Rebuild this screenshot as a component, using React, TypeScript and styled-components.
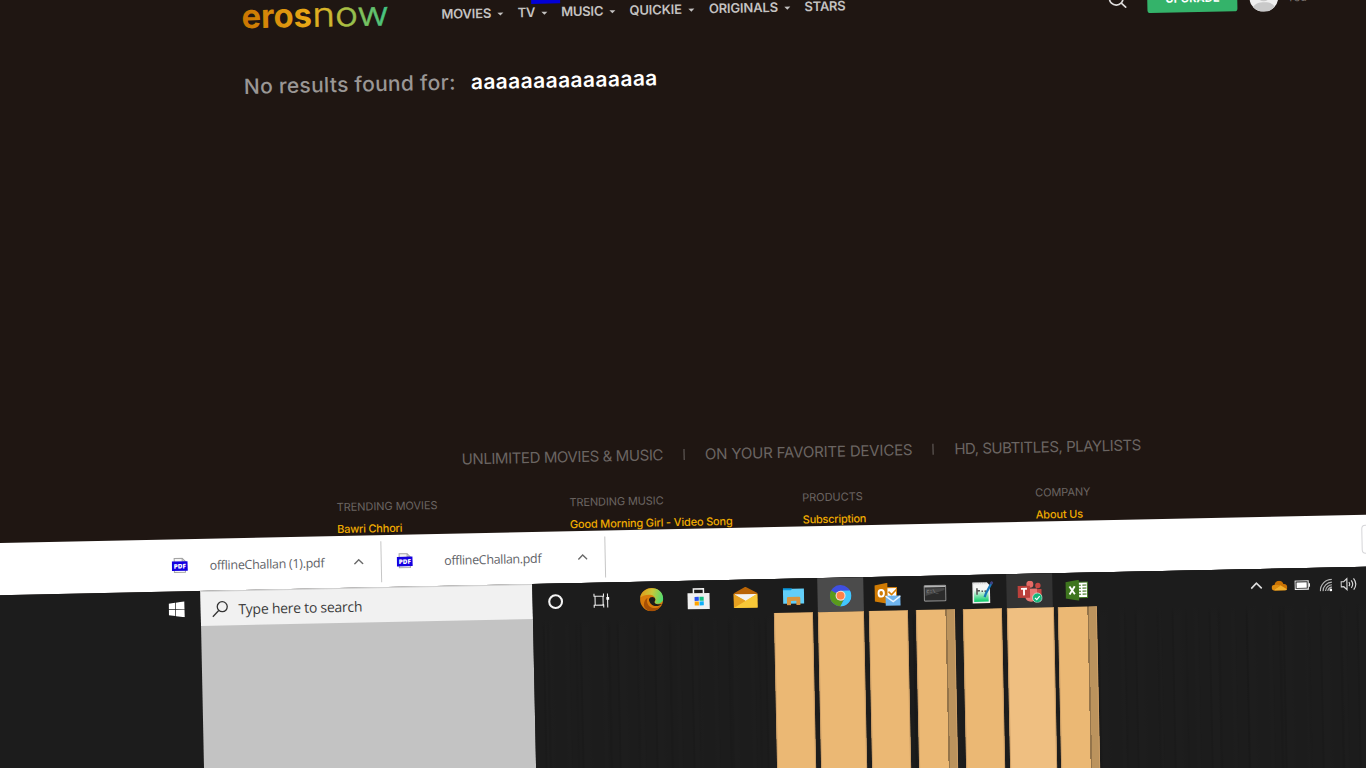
import React from "react";
import styled, { createGlobalStyle } from "styled-components";

const GlobalStyle = createGlobalStyle`
  *, *::before, *::after { box-sizing: border-box; }
  html, body { margin: 0; padding: 0; background: #1f1612; overflow: hidden; }
`;

const Viewport = styled.div`
  width: 1366px;
  height: 768px;
  overflow: hidden;
  background: #1f1612;
  font-family: Inter, "Liberation Sans", sans-serif;
`;

/* The whole screen leans slightly; it overhangs the left edge by 20px. */
const Screen = styled.div`
  position: relative;
  width: 1410px;
  height: 810px;
  margin-left: -20px;
  display: flex;
  flex-direction: column;
  transform: rotate(-1.19deg);
  transform-origin: 20px 0;
`;

/* ---------- site ---------- */

const Site = styled.div`
  height: 543px;
  flex: none;
  overflow: hidden;
  display: flex;
  flex-direction: column;
  background: #1f1612;
`;

const Header = styled.header`
  height: 46px;
  flex: none;
  display: flex;
  align-items: center;
  padding-left: 260px;
`;

const LogoBox = styled.div`
  width: 201px;
  height: 46px;
  flex: none;
`;

const Nav = styled.nav`
  width: 666.3px;
  flex: none;
  display: flex;
  align-items: center;
`;

const NavItem = styled.div<{ $w: number }>`
  width: ${(p) => p.$w}px;
  flex: none;
  display: flex;
  align-items: center;
  gap: 6px;
  color: #c4c2c1;
  font-size: 13px;
  line-height: 20px;
  font-weight: 600;
  white-space: nowrap;
`;

const NavLabel = styled.span<{ $ls: number }>`
  letter-spacing: ${(p) => p.$ls}px;
`;

const Caret = styled.span`
  width: 0;
  height: 0;
  margin-top: 3px;
  border: 3px solid transparent;
  border-top-color: #c4c2c1;
  border-bottom: 0;
`;

const Upgrade = styled.button`
  width: 90px;
  height: 27px;
  margin-left: 20px;
  padding: 0;
  border: 0;
  border-radius: 3px;
  background: #34b36a;
  color: #fff;
  font: 700 11px/27px Inter, sans-serif;
  letter-spacing: 0.1px;
`;

const Avatar = styled.div`
  width: 29px;
  height: 29px;
  margin: 0 9px 0 11.5px;
  border-radius: 50%;
  overflow: hidden;
`;

const UserName = styled.span`
  padding-top: 1px;
  color: #77716e;
  font-size: 11px;
  line-height: 16px;
`;

const Marker = styled.div`
  position: absolute;
  left: 551px;
  top: 0;
  width: 29px;
  height: 15px;
  background: #0200d6;
`;

const Result = styled.h1`
  height: 90px;
  margin: 0;
  padding-left: 262px;
  display: flex;
  align-items: center;
  color: #9a9795;
  font-size: 21px;
  font-weight: 500;
  letter-spacing: 0.27px;
  white-space: nowrap;
`;

const ResultLabel = styled.span`
  width: 227px;
`;

const Query = styled.span`
  color: #fff;
  font-weight: 600;
  letter-spacing: 0.4px;
`;

const Tagline = styled.div`
  height: 30px;
  margin-top: auto;
  padding-left: 472px;
  display: flex;
  align-items: center;
  color: #6b6562;
  font-size: 15px;
  white-space: nowrap;
`;

const TagText = styled.span<{ $w: number; $ls: number }>`
  width: ${(p) => p.$w}px;
  flex: none;
  letter-spacing: ${(p) => p.$ls}px;
`;

const TagBar = styled.i`
  width: 1px;
  height: 11px;
  margin: 0 20.5px 0 20.9px;
  background: #6b6562;
`;

const Columns = styled.div`
  height: 60px;
  flex: none;
  padding: 21px 0 0 346px;
  display: flex;
`;

const Column = styled.div`
  width: 232.9px;
  flex: none;
  font-size: 11px;
  white-space: nowrap;
`;

const ColumnTitle = styled.div<{ $ls: number }>`
  line-height: 20px;
  color: #6b6562;
  letter-spacing: ${(p) => p.$ls}px;
`;

const ColumnLink = styled.a<{ $ls: number }>`
  display: block;
  line-height: 24px;
  color: #f0ab00;
  font-weight: 500;
  letter-spacing: ${(p) => p.$ls}px;
`;

/* ---------- download shelf ---------- */

const Shelf = styled.div`
  height: 52px;
  flex: none;
  display: flex;
  align-items: center;
  padding-left: 164px;
  background: #fff;
  font-family: "Open Sans", "Noto Sans", sans-serif;
`;

const Download = styled.div<{ $w: number }>`
  width: ${(p) => p.$w}px;
  height: 41px;
  padding: 0 17px 0 15.6px;
  flex: none;
  display: flex;
  align-items: center;
  border-right: 1px solid #c6c6c6;
`;

const FileName = styled.span<{ $gap: number; $ls: number }>`
  flex: 1;
  padding-left: ${(p) => p.$gap}px;
  padding-top: 1px;
  color: #5f6368;
  font-size: 12.5px;
  line-height: 18px;
  letter-spacing: ${(p) => p.$ls}px;
  white-space: nowrap;
`;

const ShowAll = styled.div`
  width: 60px;
  height: 29px;
  margin: -4px 0 0 756px;
  border: 1px solid #d5d5d8;
  border-radius: 4px;
`;

/* ---------- task bar ---------- */

const Taskbar = styled.div`
  flex: 1;
  display: flex;
  align-items: stretch;
  padding-left: 20px;
  background: #1c1c1c;
`;

const StartArea = styled.div`
  width: 188px;
  flex: none;
  height: 35px;
  padding-left: 156px;
  display: flex;
  align-items: center;
`;

const SearchColumn = styled.div`
  width: 332.2px;
  flex: none;
  background: #c3c3c3;
  font-family: "Open Sans", "Noto Sans", sans-serif;
`;

const SearchBox = styled.div`
  height: 35.4px;
  padding: 0 0 0 10.6px;
  display: flex;
  align-items: center;
  gap: 10px;
  background: #f1f1f1;
  border-top: 1px solid #cfcfcf;
  color: #3c3c3c;
  font-size: 14px;
  letter-spacing: -0.26px;
  white-space: nowrap;
`;

const Streaks = styled.div`
  flex: 1;
  display: flex;
  background:
    linear-gradient(#1c1c1c 0 36px, transparent 46px),
    repeating-linear-gradient(90deg, transparent 0 13px, rgba(0, 0, 0, 0.08) 14px 15px, transparent 17px 41px, rgba(0, 0, 0, 0.06) 43px, transparent 45px 61px),
    repeating-linear-gradient(90deg, #1c1c1c 0 9px, #1a1a1a 10px 11px, #1d1d1d 12px 17px, #1c1c1c 21px 31px, #1d1d1d 33px 35px, #1b1b1b 37px);
`;

const Slot = styled.div<{ $w?: number; $ml?: number }>`
  width: ${(p) => p.$w ?? 47.35}px;
  margin-left: ${(p) => p.$ml ?? 0}px;
  flex: none;
  display: flex;
  flex-direction: column;
  align-items: center;
`;

const SlotIcon = styled.div<{ $bg?: string }>`
  width: 46px;
  height: 34px;
  flex: none;
  display: flex;
  align-items: center;
  justify-content: center;
  padding-top: 1px;
  background: ${(p) => p.$bg ?? "transparent"};
  svg { display: block; }
`;

const Beam = styled.div<{ $w: number; $color: string; $split?: boolean }>`
  width: ${(p) => p.$w}px;
  flex: 1;
  background: ${(p) =>
    p.$split
      ? `linear-gradient(90deg, ${p.$color} 0 29.5px, #94744a 29.5px 31px, #bb935d 31px)`
      : p.$color};
  box-shadow: inset 1px 0 #cd9f67, inset -1px 0 #cd9f67;
`;

const Tray = styled.div`
  height: 34px;
  margin-left: 143.8px;
  display: flex;
  align-items: center;
`;

const TrayCell = styled.div`
  width: 23.2px;
  display: flex;
  justify-content: center;
`;

/* ---------- drawings ---------- */

const Logo = () => (
  <svg width="160" height="46" viewBox="0 0 160 46">
    <defs>
      <linearGradient id="lg" gradientUnits="userSpaceOnUse" x1="1" y1="0" x2="147" y2="0">
        <stop offset="0" stopColor="#c97400" />
        <stop offset="0.45" stopColor="#e8a716" />
        <stop offset="0.58" stopColor="#d8b62a" />
        <stop offset="0.75" stopColor="#9cc04a" />
        <stop offset="1" stopColor="#3fc585" />
      </linearGradient>
    </defs>
    <text x="1" y="33.3" fontFamily="Inter" fontWeight="700" fontSize="33" textLength="70.5" lengthAdjust="spacingAndGlyphs" fill="url(#lg)">eros</text>
    <text x="72" y="33.3" fontFamily="Inter" fontWeight="300" fontSize="33.5" textLength="76.5" lengthAdjust="spacingAndGlyphs" fill="url(#lg)" stroke="url(#lg)" strokeWidth="0.5">now</text>
  </svg>
);

const Magnifier = () => (
  <svg width="20" height="20" viewBox="0 0 20 20" fill="none" stroke="#dddbda" strokeWidth="1.7">
    <circle cx="9" cy="8.5" r="6.8" />
    <path d="M14 13.500l4.300 4" strokeLinecap="round" />
  </svg>
);

const Person = () => (
  <svg width="29" height="29" viewBox="0 0 29 29">
    <rect width="29" height="29" fill="#efefef" />
    <path d="M3 25c3-5 7-5.500 11.500-5.500S23 20 26 25l-4 4H7z" fill="#c9c9c9" />
    <circle cx="14.5" cy="11.5" r="7" fill="#c9c9c9" />
  </svg>
);

const PdfIcon = () => (
  <svg width="16" height="16" viewBox="0 0 16 16">
    <path d="M2.5 15V1h8l3 3v11z" fill="#f4f4f4" stroke="#a4a4a4" />
    <path d="M10.5 1v3h3" fill="none" stroke="#a4a4a4" />
    <rect x="0" y="4" width="16" height="9.5" fill="#1400e0" />
    <text x="8" y="11.2" textAnchor="middle" fontFamily="Open Sans" fontWeight="800" fontSize="6.4" fill="#fff">PDF</text>
  </svg>
);

const Chevron = ({ color, w = 10 }: { color: string; w?: number }) => (
  <svg width={w} height={w * 0.6} viewBox="0 0 10 6" fill="none" stroke={color} strokeWidth="1.4">
    <path d="M0.6 5.4L5 1l4.400 4.400" />
  </svg>
);

const WindowsIcon = () => (
  <svg width="16" height="16" viewBox="0 0 16 16" fill="#fff">
    <path d="M0 2.2L6.5 1.3V7.6H0zM7.2 1.2L16 0V7.6H7.2zM0 8.3H6.5V14.6L0 13.7zM7.2 8.3H16V16L7.2 14.7z" />
  </svg>
);

const SearchGlyph = () => (
  <svg width="17" height="17" viewBox="0 0 17 17" fill="none" stroke="#333" strokeWidth="1.3">
    <circle cx="10.6" cy="6.2" r="5" />
    <path d="M7 9.9L1 16" />
  </svg>
);

const Cortana = () => (
  <svg width="16" height="16" viewBox="0 0 16 16">
    <circle cx="8" cy="8" r="6.4" fill="none" stroke="#f4f4f4" strokeWidth="2.1" />
  </svg>
);

const TaskView = () => (
  <svg width="18" height="16" viewBox="0 0 18 16" fill="none" stroke="#e8e8e8" strokeWidth="1.1">
    <path d="M1.5 1v2.5H11V1M1.5 15v-2.5H11V15M2.500 3.500v9M10.500 3.500v9M15 1v14" />
    <rect x="13.8" y="4.5" width="2.8" height="2.8" fill="#fff" stroke="none" />
  </svg>
);

const Edge = () => (
  <svg width="24" height="24" viewBox="0 0 24 24">
    <defs>
      <linearGradient id="ed" x1="0" y1="0.3" x2="1" y2="0.5">
        <stop offset="0" stopColor="#e09a18" />
        <stop offset="0.5" stopColor="#c9c83a" />
        <stop offset="1" stopColor="#51dc70" />
      </linearGradient>
    </defs>
    <circle cx="12" cy="12" r="11.5" fill="#d87b0b" />
    <path d="M0.6 10C2-2 23-3 23.6 11c.2 5-6 6-8.2 4.6-1-.8.8-1.6.5-3.9C15 5.5 5 6 .6 10z" fill="url(#ed)" />
    <path d="M8 10c-2 5 1 11 8 10.5 3 0 5-2 6-3.5-3 7-13 9-17 3-2-4 0-8 3-10z" fill="#a75005" />
    <path d="M9.3 12c1-3.5 6-3 6.4-.3.2 1.6-1.5 2.4-.6 3.8 1.5 1.8 5 1.5 7.5 1.1-5 3.4-12 2.4-13.3-4.6z" fill="#1d1c1a" />
  </svg>
);

const Store = () => (
  <svg width="24" height="24" viewBox="0 0 24 24">
    <path d="M7 7V2.2h10V7" fill="none" stroke="#f2f2f2" strokeWidth="1.5" />
    <path d="M1 6.5h22V22.5H1z" fill="#f0f0f0" />
    <rect x="8" y="10.2" width="4.2" height="4" fill="#2650f0" />
    <rect x="12.9" y="10.2" width="4.2" height="4" fill="#12bf82" />
    <rect x="8" y="14.8" width="4.2" height="4" fill="#ffa400" />
    <rect x="12.9" y="14.8" width="4.2" height="4" fill="#10b0f8" />
  </svg>
);

const Mail = () => (
  <svg width="24" height="22" viewBox="0 0 24 22">
    <path d="M0 6.5L12 0l12 6.5V14H0z" fill="#b96406" />
    <path d="M1.5 7.500h21V15h-21z" fill="#f3f3f3" />
    <path d="M0 7l12 7.5L24 7v14H0z" fill="#f0b42a" />
    <path d="M0 21L24 7v14z" fill="#f8c838" />
    <path d="M0 7l12 7-12 7z" fill="#e6a020" />
  </svg>
);

const Folder = () => (
  <svg width="22" height="18" viewBox="0 0 22 18">
    <path d="M0.5 0.5h9v3h-9z" fill="#0c9be0" />
    <path d="M0.5 2.5h8l1-1.5h12v15h-21z" fill="#62cef8" />
    <path d="M4.3 17.5V10.6q0-1.300 1.300-1.300h10.800q1.300 0 1.300 1.300v6.900h-4v-4.300H8.300v4.300z" fill="#d9953f" />
  </svg>
);

const Chrome = () => (
  <svg width="22" height="22" viewBox="0 0 22 22">
    <circle cx="11" cy="11" r="10.7" fill="#3f4fe0" />
    <path d="M11 11L1.7 5.7A10.7 10.7 0 0 0 11 21.7L14 15z" fill="#5a9a1c" />
    <path d="M11 6h9.5A10.7 10.7 0 0 1 10.5 21.7L15.5 13z" fill="#42c8fb" />
    <circle cx="11" cy="11" r="5" fill="#f3ded6" />
    <circle cx="11" cy="11" r="3.9" fill="#ff8148" />
  </svg>
);

const Outlook = () => (
  <svg width="26" height="24" viewBox="0 0 26 24">
    <rect x="12" y="5" width="10" height="10" fill="#fff" stroke="#d98208" />
    <path d="M14 9l3 3 5-5" fill="none" stroke="#d98208" strokeWidth="1.6" />
    <path d="M0 2.5L13 0v21L0 18.5z" fill="#cf7a03" />
    <ellipse cx="6.7" cy="10.5" rx="2.7" ry="3.3" fill="none" stroke="#fff" strokeWidth="1.9" />
    <path d="M11 13h15v10H11z" fill="#6eb4ee" />
    <path d="M11 13.5l7.5 5.5 7.5-5.5" fill="none" stroke="#e8f4ff" strokeWidth="1.5" />
  </svg>
);

const Terminal = () => (
  <svg width="23" height="17" viewBox="0 0 23 17">
    <rect x="0.7" y="0.7" width="21.6" height="15.6" rx="1" fill="#2b2b2b" stroke="#8a8a8a" strokeWidth="1.2" />
    <path d="M1 1.7h21" stroke="#b5b5b5" strokeWidth="1.5" />
    <path d="M2 3.5h19v2L2 11z" fill="#484848" />
    <text x="3" y="8.3" fontFamily="Liberation Mono" fontSize="5" fill="#999">C:\_</text>
  </svg>
);

const Notepad = () => (
  <svg width="22" height="24" viewBox="0 0 22 24">
    <defs>
      <linearGradient id="np" x1="0" y1="0" x2="0" y2="1">
        <stop offset="0.3" stopColor="#f6f8f6" />
        <stop offset="0.95" stopColor="#18cf70" />
      </linearGradient>
    </defs>
    <path d="M1 1.5h14.5L18.5 5v17.5H1z" fill="#eee" />
    <path d="M2.5 4h14.5v17H2.5z" fill="url(#np)" />
    <path d="M2 2h13" stroke="#999" strokeDasharray="1 1.2" />
    <path d="M5.500 7.500v6.500M5.500 10h3M10 10.500h1.500M13 10.500h1.500" stroke="#555" strokeWidth="1.6" fill="none" />
    <path d="M20.5 2l-6 10.5-1.5 4" stroke="#1879b8" strokeWidth="2.3" fill="none" />
    <path d="M21 1l-1.5 2.5" stroke="#404080" strokeWidth="2.5" />
  </svg>
);

const Teams = () => (
  <svg width="25" height="22" viewBox="0 0 25 22">
    <circle cx="12.5" cy="3.5" r="3.5" fill="#e56b66" />
    <circle cx="20.5" cy="5" r="2.7" fill="#c84843" />
    <path d="M16 8.5h8v8q-2 4-6 3z" fill="#c84843" />
    <path d="M7.5 8h12v8q-1 5-6 5t-6-5z" fill="#e97772" />
    <rect x="0" y="5" width="12.5" height="12" fill="#bb403b" />
    <path d="M3.5 8h6M6.5 8v6.500" stroke="#fff" strokeWidth="1.9" />
    <circle cx="19.7" cy="17.2" r="4.8" fill="#18b67b" stroke="#d8eee4" strokeWidth="0.7" />
    <path d="M17.3 17.3l1.800 1.800 3-3.500" fill="none" stroke="#fff" strokeWidth="1.2" />
  </svg>
);

const Excel = () => (
  <svg width="23" height="21" viewBox="0 0 23 21">
    <rect x="11" y="2.5" width="11" height="15.5" fill="#fff" stroke="#3e751e" />
    <path d="M12.5 5.5h3m1.5 0h4M12.5 8.5h3m1.5 0h4M12.5 11.5h3m1.5 0h4M12.5 14.5h3m1.5 0h4" stroke="#3e751e" strokeWidth="1.1" />
    <path d="M0 2.2L13.5 0v21L0 18.5z" fill="#3e751e" />
    <path d="M4 6.500l5.300 8M9.300 6.500L4 14.500" stroke="#fff" strokeWidth="1.9" />
  </svg>
);

const Cloud = () => (
  <svg width="16" height="10" viewBox="0 0 16 10">
    <path d="M3.5 10C-1 10-1 4.3 3 4.3 4-.8 10.5-1.2 12 3.5c4.500-.5 5 5.500 1.500 6.500z" fill="#c97204" />
    <path d="M2 9.2L9 4.6l6.500 4.200Q14.800 10 13.500 10h-10z" fill="#f0ae2c" />
    <path d="M.4 6Q1 4.300 3 4.300q3.500-.4 6 1L2 9.500Q.2 8.500.4 6z" fill="#dd8c10" />
  </svg>
);

const Battery = () => (
  <svg width="16" height="10" viewBox="0 0 16 10">
    <rect x="0.6" y="0.8" width="13.2" height="8.4" fill="none" stroke="#f0f0f0" strokeWidth="1.1" />
    <rect x="2.1" y="2.3" width="10.2" height="5.4" fill="#fff" />
    <rect x="14.3" y="3.3" width="1.3" height="3.5" fill="#f0f0f0" />
  </svg>
);

const Wifi = () => (
  <svg width="13" height="13" viewBox="0 0 13 13" fill="none" stroke="#b5b5b5" strokeWidth="1.2">
    <path d="M0.8 12.5A11.5 11.5 0 0 1 12.5 0.9M3.5 12.500a9 9 0 0 1 9-8.800M6 12.500a6.500 6.500 0 0 1 6.500-6.200M8.300 12.500a4 4 0 0 1 4.200-3.800" />
    <circle cx="11.3" cy="11.5" r="1.4" fill="#fff" stroke="none" />
  </svg>
);

const Volume = () => (
  <svg width="17" height="14" viewBox="0 0 17 14" fill="none" stroke="#d6d6d6" strokeWidth="1.2">
    <path d="M0.7 4.5h2.6L6.5 1.5v11L3.3 9.5H.7zM8.5 5q1.500 2 0 4M10.800 3.300q3 3.700 0 7.400M13.200 1.300q4.300 5.700 0 11.400" />
  </svg>
);

/* ---------- data ---------- */

const navItems = [
  { label: "MOVIES", w: 76.2, ls: -0.2 },
  { label: "TV", w: 43.5, ls: -0.2 },
  { label: "MUSIC", w: 68.3, ls: -0.2 },
  { label: "QUICKIE", w: 79.5, ls: -0.1 },
  { label: "ORIGINALS", w: 95.6, ls: -0.16 },
  { label: "STARS", w: 60, ls: -0.25, plain: true },
];

const columns = [
  { title: "TRENDING MOVIES", link: "Bawri Chhori", tls: -0.06, lls: -0.22 },
  { title: "TRENDING MUSIC", link: "Good Morning Girl - Video Song", tls: -0.12, lls: -0.17 },
  { title: "PRODUCTS", link: "Subscription", tls: -0.05, lls: -0.27 },
  { title: "COMPANY", link: "About Us", tls: -0.1, lls: -0.15 },
];

const sand = "#ebb874";

const apps = [
  { icon: <Edge /> },
  { icon: <Store /> },
  { icon: <Mail /> },
  { icon: <Folder />, beam: 39, color: sand },
  { icon: <Chrome />, beam: 46, color: sand, bg: "#4b4b4b" },
  { icon: <Outlook />, beam: 39, color: sand },
  { icon: <Terminal />, beam: 39, color: sand, split: true },
  { icon: <Notepad />, beam: 39, color: sand },
  { icon: <Teams />, beam: 46.5, color: "#efbf81", bg: "#333333" },
  { icon: <Excel />, beam: 39, color: sand, split: true },
];

const tray = [<Chevron color="#ddd" w={12} />, <Cloud />, <Battery />, <Wifi />, <Volume />];

export default function App() {
  return (
    <Viewport>
      <GlobalStyle />
      <Screen>
        <Site>
          <Header>
            <LogoBox><Logo /></LogoBox>
            <Nav>
              {navItems.map((n) => (
                <NavItem key={n.label} $w={n.w}>
                  <NavLabel $ls={n.ls}>{n.label}</NavLabel>
                  {!n.plain && <Caret />}
                </NavItem>
              ))}
            </Nav>
            <Magnifier />
            <Upgrade>UPGRADE</Upgrade>
            <Avatar><Person /></Avatar>
            <UserName>You</UserName>
          </Header>
          <Result>
            <ResultLabel>No results found for:</ResultLabel>
            <Query>aaaaaaaaaaaaaaa</Query>
          </Result>
          <Tagline>
            <TagText $w={201} $ls={-0.41}>UNLIMITED MOVIES &amp; MUSIC</TagText>
            <TagBar />
            <TagText $w={207} $ls={-0.18}>ON YOUR FAVORITE DEVICES</TagText>
            <TagBar />
            <TagText $w={187} $ls={-0.46}>HD, SUBTITLES, PLAYLISTS</TagText>
          </Tagline>
          <Columns>
            {columns.map((c) => (
              <Column key={c.title}>
                <ColumnTitle $ls={c.tls}>{c.title}</ColumnTitle>
                <ColumnLink $ls={c.lls}>{c.link}</ColumnLink>
              </Column>
            ))}
          </Columns>
        </Site>
        <Marker />
        <Shelf>
          <Download $w={225.5}>
            <PdfIcon />
            <FileName $gap={22.2} $ls={-0.28}>offlineChallan (1).pdf</FileName>
            <Chevron color="#6a6a6a" />
          </Download>
          <Download $w={224.7}>
            <PdfIcon />
            <FileName $gap={31.4} $ls={-0.34}>offlineChallan.pdf</FileName>
            <Chevron color="#6a6a6a" />
          </Download>
          <ShowAll />
        </Shelf>
        <Taskbar>
          <StartArea><WindowsIcon /></StartArea>
          <SearchColumn>
            <SearchBox><SearchGlyph />Type here to search</SearchBox>
          </SearchColumn>
          <Streaks>
            <Slot $w={45.6}><SlotIcon><Cortana /></SlotIcon></Slot>
            <Slot $w={46}><SlotIcon><TaskView /></SlotIcon></Slot>
            {apps.map((a, i) => (
              <Slot key={i} $ml={i === 0 ? 3.1 : 0}>
                <SlotIcon $bg={a.bg}>{a.icon}</SlotIcon>
                {a.beam && <Beam $w={a.beam} $color={a.color} $split={a.split} />}
              </Slot>
            ))}
            <Tray>
              {tray.map((t, i) => <TrayCell key={i}>{t}</TrayCell>)}
            </Tray>
          </Streaks>
        </Taskbar>
      </Screen>
    </Viewport>
  );
}
